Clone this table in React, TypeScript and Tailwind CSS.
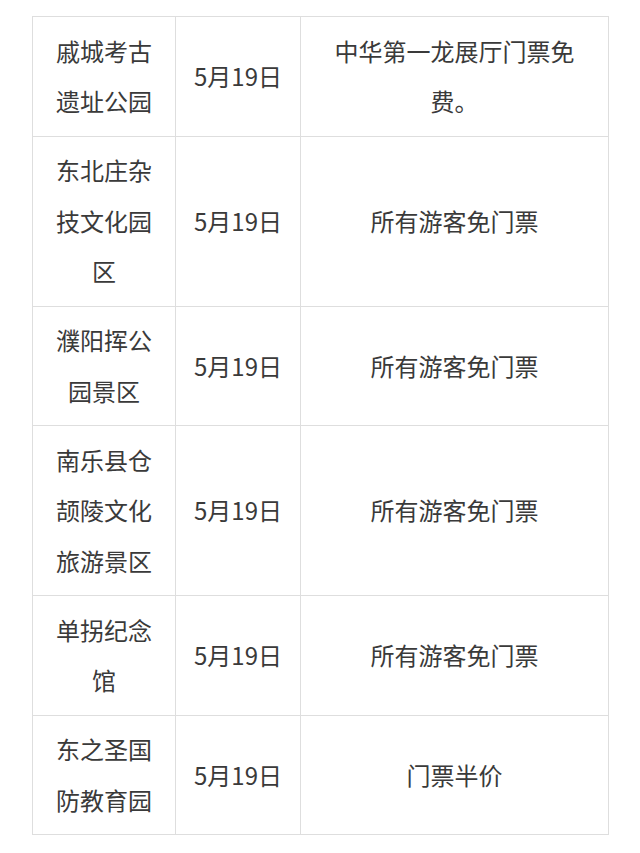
const rows = [
  { name: "戚城考古遗址公园", date: "5月19日", note: "中华第一龙展厅门票免费。" },
  { name: "东北庄杂技文化园区", date: "5月19日", note: "所有游客免门票" },
  { name: "濮阳挥公园景区", date: "5月19日", note: "所有游客免门票" },
  { name: "南乐县仓颉陵文化旅游景区", date: "5月19日", note: "所有游客免门票" },
  { name: "单拐纪念馆", date: "5月19日", note: "所有游客免门票" },
  { name: "东之圣国防教育园", date: "5月19日", note: "门票半价" },
];

export default function App() {
  return (
    <div
      className="min-h-screen bg-white pt-[16px] pl-[32px]"
      style={{ fontFamily: '"Noto Sans CJK SC", "Noto Sans", sans-serif' }}
    >
      <table className="w-[576px] table-fixed border-collapse text-[24px] leading-[50.5px] text-[#3a3a3a]">
        <colgroup>
          <col className="w-[143px]" />
          <col className="w-[125px]" />
          <col className="w-[308px]" />
        </colgroup>
        <tbody>
          {rows.map((r) => (
            <tr key={r.name}>
              <td className="border-[1.5px] border-[#dedede] px-[20px] py-[8.75px] text-center align-middle">
                {r.name}
              </td>
              <td className="border-[1.5px] border-[#dedede] px-[4px] py-[8.75px] text-center align-middle whitespace-nowrap">
                {r.date}
              </td>
              <td className="border-[1.5px] border-[#dedede] px-[24px] py-[8.75px] text-center align-middle">
                {r.note}
              </td>
            </tr>
          ))}
        </tbody>
      </table>
    </div>
  );
}
